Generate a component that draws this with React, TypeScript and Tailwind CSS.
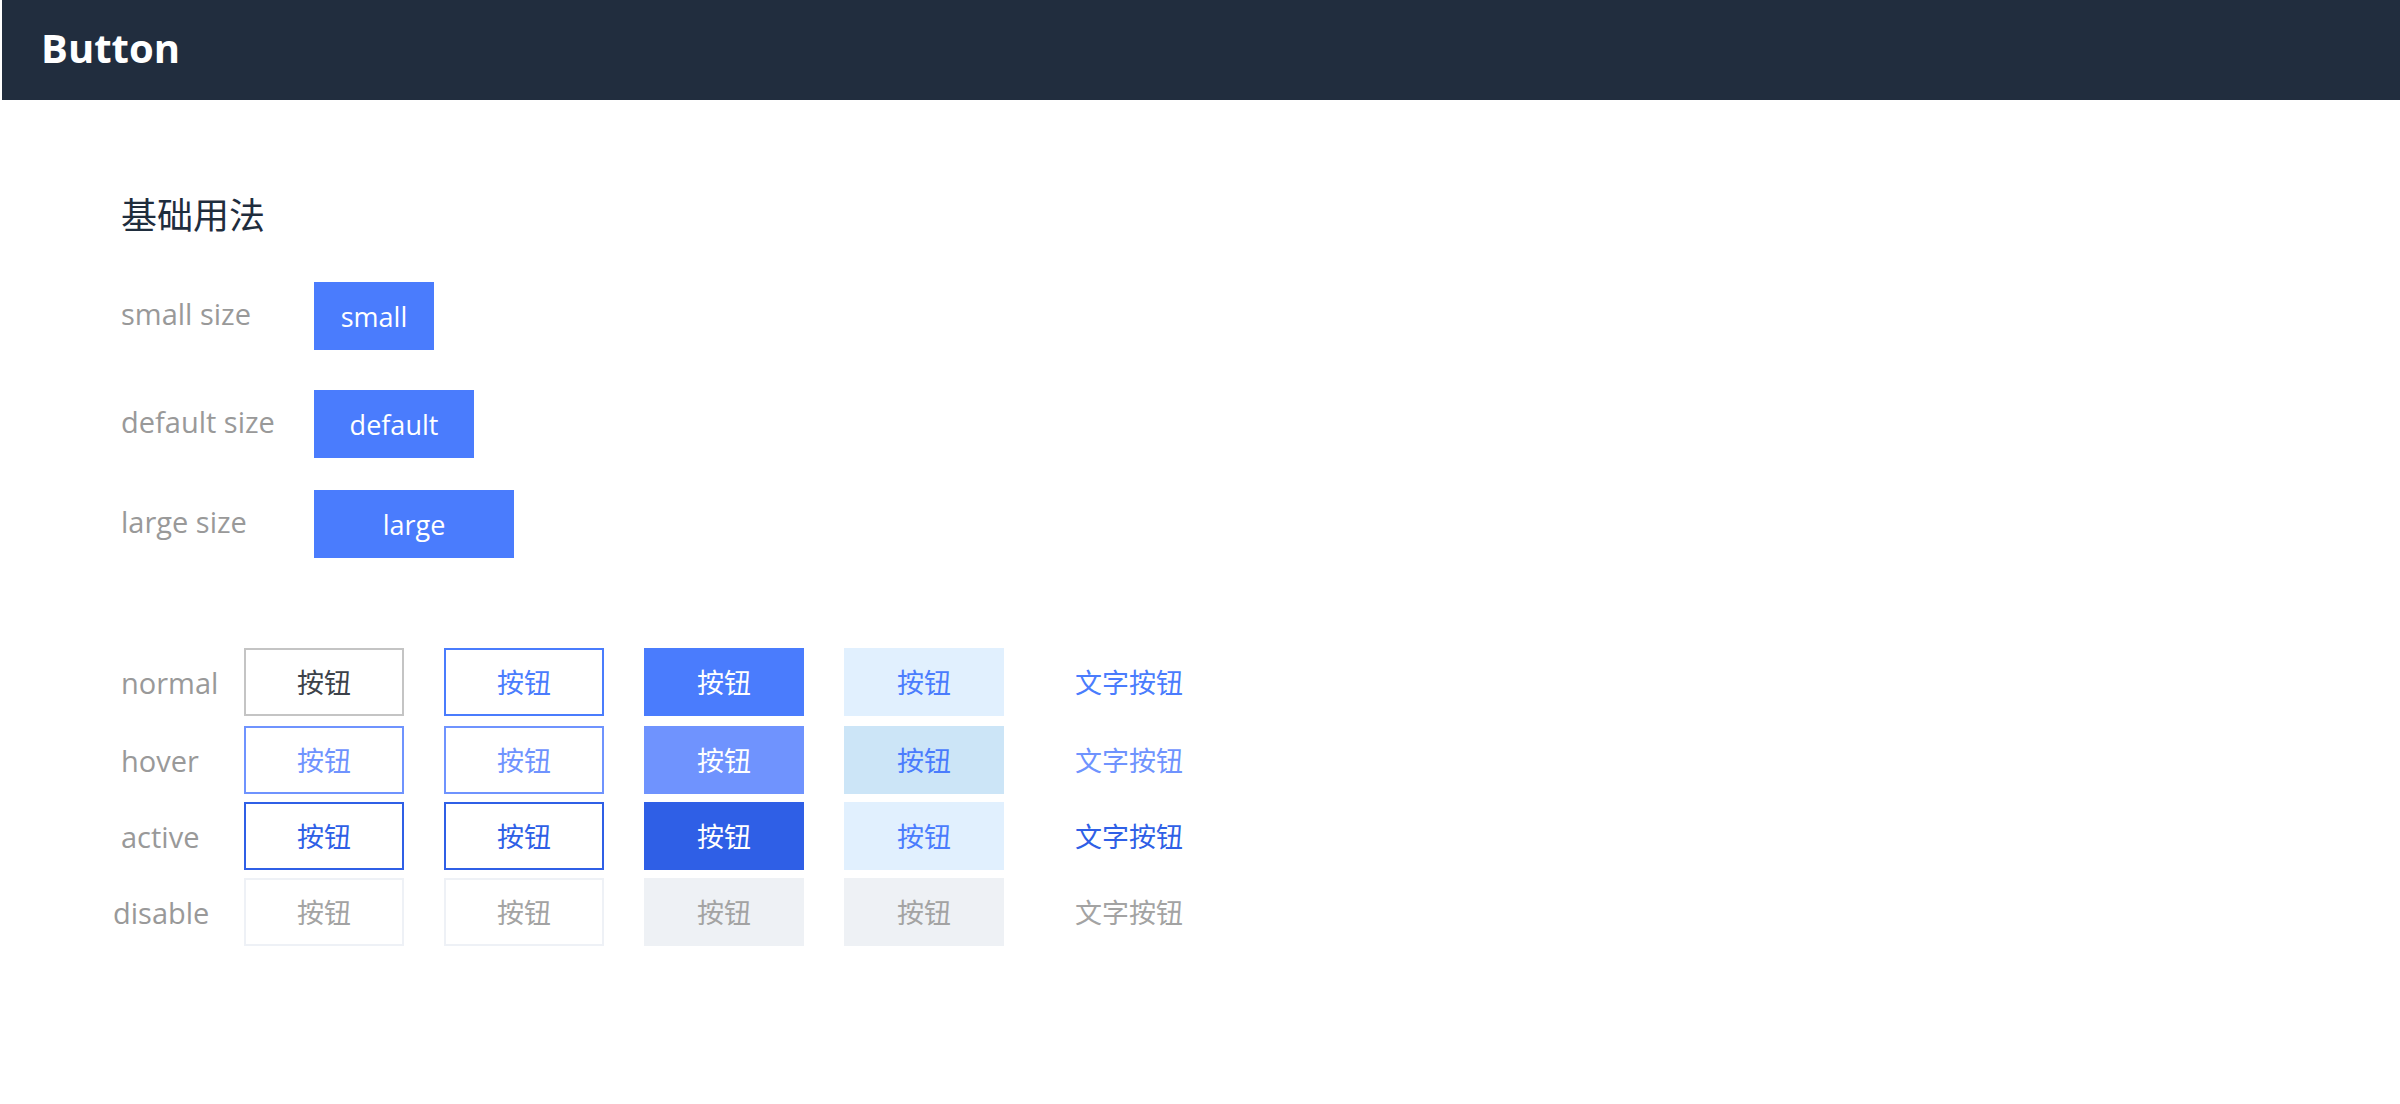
const sans = "font-['Open_Sans','Noto_Sans_CJK_SC',sans-serif]"

const rows: { label: string; labelCls: string; cells: string[]; text: string }[] = [
  {
    label: 'normal',
    labelCls: '',
    cells: [
      'border-2 border-[#c4c4c4] bg-white text-[#3c4149]',
      'border-2 border-[#4a7cfd] bg-white text-[#4a7cfd]',
      'bg-[#4a7cfd] text-white',
      'bg-[#e1f0fe] text-[#4a7cfd]',
    ],
    text: 'text-[#4a7cfd]',
  },
  {
    label: 'hover',
    labelCls: '',
    cells: [
      'border-2 border-[#6f93fe] bg-white text-[#6f93fe]',
      'border-2 border-[#6f93fe] bg-white text-[#6f93fe]',
      'bg-[#6f93fe] text-white',
      'bg-[#cce5f7] text-[#4a7cfd]',
    ],
    text: 'text-[#6f93fe]',
  },
  {
    label: 'active',
    labelCls: '',
    cells: [
      'border-2 border-[#2f5fe6] bg-white text-[#2f5fe6]',
      'border-2 border-[#2f5fe6] bg-white text-[#2f5fe6]',
      'bg-[#2f5fe6] text-white',
      'bg-[#e1f0fe] text-[#4a7cfd]',
    ],
    text: 'text-[#2f5fe6]',
  },
  {
    label: 'disable',
    labelCls: '-ml-[8px]',
    cells: [
      'border-2 border-[#eef1f6] bg-white text-[#a3a3a3]',
      'border-2 border-[#eef1f6] bg-white text-[#a3a3a3]',
      'bg-[#eef1f5] text-[#a3a3a3]',
      'bg-[#eef1f5] text-[#a3a3a3]',
    ],
    text: 'text-[#a3a3a3]',
  },
]

const sizes = [
  { label: 'small size', text: 'small', w: 'w-[120px]' },
  { label: 'default size', text: 'default', w: 'w-[160px]' },
  { label: 'large size', text: 'large', w: 'w-[200px]' },
]

function App() {
  return (
    <div className={`min-h-[1104px] bg-white ${sans}`}>
      <header className="ml-[2px] flex h-[100px] items-center bg-[#212d3e] pb-[4px] pl-[39px]">
        <h1 className="text-[40px] font-bold leading-none text-white">Button</h1>
      </header>

      <main className="pl-[121px] pt-[95px]">
        <h2 className="text-[36px] leading-[36px] text-[#1f2d3d] font-['Noto_Sans_CJK_SC',sans-serif]">
          基础用法
        </h2>

        <div className="mt-[51px] flex flex-col">
          {sizes.map((s, i) => (
            <div
              key={s.text}
              className={`flex items-center ${i === 1 ? 'mt-[40px]' : ''} ${i === 2 ? 'mt-[32px]' : ''}`}
            >
              <span className="w-[193px] pb-[6px] text-[29px] leading-none text-[#999999]">{s.label}</span>
              <button
                className={`flex h-[68px] ${s.w} items-center justify-center bg-[#4a7cfd] text-[27px] leading-none text-white`}
              >
                {s.text}
              </button>
            </div>
          ))}
        </div>

        <div className="mt-[90px] flex flex-col">
          {rows.map((r, i) => (
            <div key={r.label} className={`flex items-center ${i === 1 ? 'mt-[10px]' : ''} ${i > 1 ? 'mt-[8px]' : ''}`}>
              <span className={`w-[123px] pt-[1px] text-[29px] leading-none text-[#999999] ${r.labelCls}`}>
                {r.label}
              </span>
              <div className={`flex gap-[40px] ${r.label === 'disable' ? 'ml-[8px]' : ''}`}>
                {r.cells.map((c, j) => (
                  <button
                    key={j}
                    className={`flex h-[68px] w-[160px] items-center justify-center text-[27px] leading-none ${c}`}
                  >
                    按钮
                  </button>
                ))}
              </div>
              <span className={`ml-[71px] text-[27px] leading-none ${r.text}`}>文字按钮</span>
            </div>
          ))}
        </div>
      </main>
    </div>
  )
}

export default App
